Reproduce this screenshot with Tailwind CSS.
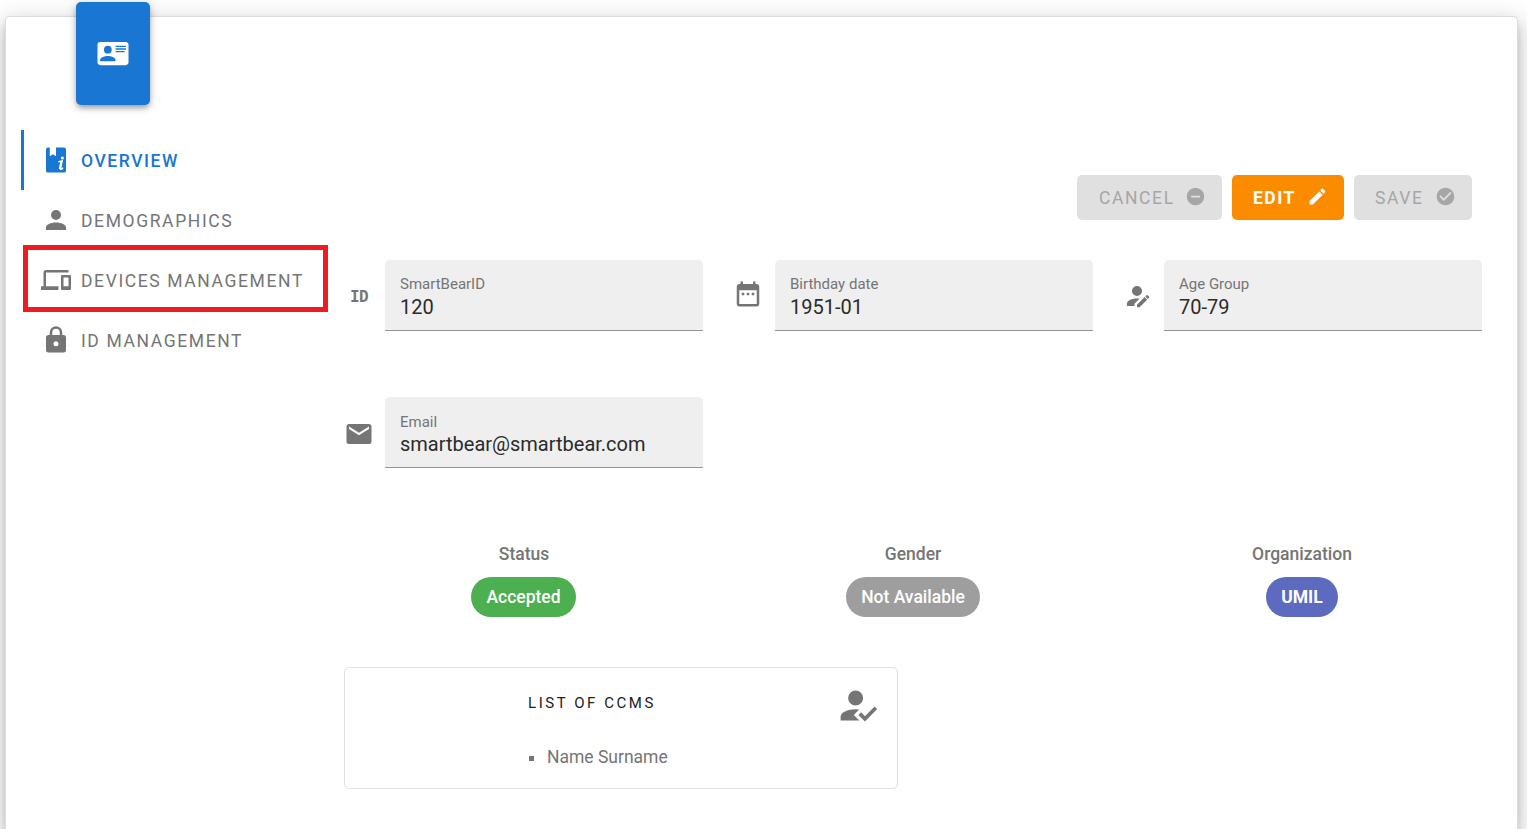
<!DOCTYPE html>
<html lang="en">
<head>
<meta charset="utf-8">
<title>Overview</title>
<script src="https://cdn.jsdelivr.net/npm/@tailwindcss/browser@4"></script>
</head>
<body class="h-[829px] overflow-hidden bg-white pt-4 pl-[5px] pr-[9px] font-[Roboto,sans-serif] text-[#757575]">
<main class="relative flex h-[813px] rounded-t-[5px] border border-b-0 border-[#dcdcdc] bg-white shadow-[0_6px_7px_-3px_rgba(0,0,0,0.2),0_10px_16px_1px_rgba(0,0,0,0.14),0_4px_22px_4px_rgba(0,0,0,0.12)]">
  <div class="absolute -top-[15px] left-[70px] flex h-[103px] w-[74px] items-center justify-center rounded-[5px] bg-[#1976d2] text-white shadow-[0_4px_5px_-2px_rgba(0,0,0,0.2),0_3px_6px_0_rgba(0,0,0,0.18),0_1px_12px_0_rgba(0,0,0,0.14)]">
    <svg class="h-[31px] w-[32px]" viewBox="0 0 24 24" fill="currentColor"><path d="M2,3H22C23.05,3 24,3.95 24,5V19C24,20.05 23.05,21 22,21H2C0.95,21 0,20.05 0,19V5C0,3.95 0.95,3 2,3M14,6V7H22V6H14M14,8V9H21.5L22,9V8H14M14,10V11H21V10H14M8,13.91C6,13.91 2,15 2,17V18H14V17C14,15 10,13.91 8,13.91M8,6A3,3 0 0,0 5,9A3,3 0 0,0 8,12A3,3 0 0,0 11,9A3,3 0 0,0 8,6Z"/></svg>
  </div>

  <nav class="ml-[15px] mt-[113px] w-[323px] shrink-0 text-[17.5px] tracking-[1.61px]">
    <a class="flex h-[60px] items-center gap-[10px] border-l-3 border-[#1976d2] pl-[17px] font-medium tracking-[1.56px] text-[#1976d2]">
      <svg class="h-[30px] w-[30px]" viewBox="0 0 24 24" fill="currentColor"><path d="M5.5,2H7V9L9.500,7.400L12,9V2H18.500A1.500,1.500 0 0,1 20,3.500V20.500A1.500,1.500 0 0,1 18.500,22H5.500A1.500,1.500 0 0,1 4,20.500V3.500A1.500,1.500 0 0,1 5.500,2Z"/><circle cx="17.100" cy="10.300" r="1.200" fill="white"/><path d="M13.900,13.500L16.900,12.700L15.500,18.900C15.400,19.900 16.600,19.600 17.600,18.200" fill="none" stroke="white" stroke-width="1.200"/><path d="M16.300,13L15,19.200" stroke="white" stroke-width="1.600"/></svg>
      <span class="pt-[2px]">OVERVIEW</span>
    </a>
    <a class="flex h-[60px] items-center gap-[10px] pl-5">
      <svg class="h-[30px] w-[30px]" viewBox="0 0 24 24" fill="currentColor"><path d="M12,4A4,4 0 0,1 16,8A4,4 0 0,1 12,12A4,4 0 0,1 8,8A4,4 0 0,1 12,4M12,14C16.42,14 20,15.79 20,18V20H4V18C4,15.79 7.58,14 12,14Z"/></svg>
      <span class="pt-[2px]">DEMOGRAPHICS</span>
    </a>
    <a class="relative flex h-[60px] items-center gap-[10px] pl-5">
      <span class="absolute left-[2px] -top-[5px] h-[67px] w-[305px] border-5 border-[#ed1c24]"></span>
      <svg class="h-[30px] w-[30px]" viewBox="0 0 24 24" fill="currentColor"><path d="M4 6h18V4H4c-1.1 0-2 .9-2 2v11H0v3h14v-3H4V6zm19 2h-6c-.55 0-1 .45-1 1v10c0 .55.45 1 1 1h6c.55 0 1-.45 1-1V9c0-.55-.45-1-1-1zm-1 9h-4v-7h4v7z"/></svg>
      <span class="pt-[2px]">DEVICES MANAGEMENT</span>
    </a>
    <a class="flex h-[60px] items-center gap-[10px] pl-5">
      <svg class="h-[30px] w-[30px]" viewBox="0 0 24 24" fill="currentColor"><path d="M12,17A2,2 0 0,0 14,15C14,13.89 13.1,13 12,13A2,2 0 0,0 10,15A2,2 0 0,0 12,17M18,8A2,2 0 0,1 20,10V20A2,2 0 0,1 18,22H6A2,2 0 0,1 4,20V10C4,8.89 4.9,8 6,8H7V6A5,5 0 0,1 12,1A5,5 0 0,1 17,6V8H18M12,3A3,3 0 0,0 9,6V8H15V6A3,3 0 0,0 12,3Z"/></svg>
      <span class="pt-[2px]">ID MANAGEMENT</span>
    </a>
  </nav>

  <section class="w-[1140px] shrink-0 pt-[158px]">
    <div class="mr-[12px] flex justify-end gap-[10px] text-[17.5px] tracking-[1.6px] text-[#a6a6a6]">
      <button class="flex h-[45px] w-[145px] items-center rounded-[5px] bg-[#e0e0e0] pl-[22px] pt-[2px]">CANCEL<svg class="-mt-[4px] ml-[10px] h-[21px] w-[21px]" viewBox="0 0 24 24" fill="currentColor"><path d="M17,13H7V11H17M12,2A10,10 0 0,0 2,12A10,10 0 0,0 12,22A10,10 0 0,0 22,12A10,10 0 0,0 12,2Z"/></svg></button>
      <button class="flex h-[45px] w-[112px] items-center rounded-[5px] bg-[#fb8c00] pl-[21px] pt-[2px] font-bold tracking-[1.5px] text-white">EDIT<svg class="-mt-[4px] ml-[11px] h-[21px] w-[21px]" viewBox="0 0 24 24" fill="currentColor"><path d="M20.71,7.04C21.1,6.65 21.1,6 20.71,5.63L18.37,3.29C18,2.9 17.35,2.9 16.96,3.29L15.12,5.12L18.87,8.87M3,17.25V21H6.75L17.81,9.93L14.06,6.18L3,17.25Z"/></svg></button>
      <button class="flex h-[45px] w-[118px] items-center rounded-[5px] bg-[#e0e0e0] pl-[21px] pt-[2px]">SAVE<svg class="-mt-[4px] ml-[11px] h-[21px] w-[21px]" viewBox="0 0 24 24" fill="currentColor"><path d="M12 2C6.5 2 2 6.5 2 12S6.5 22 12 22 22 17.5 22 12 17.5 2 12 2M10 17L5 12L6.41 10.59L10 14.17L17.59 6.58L19 8L10 17Z"/></svg></button>
    </div>

    <div class="mt-10 grid grid-cols-[359px_360px_359px] gap-x-[30px] gap-y-[66px]">
      <div class="flex justify-between">
        <span class="flex h-[71px] w-[30px] items-center justify-center pt-[2px] font-['DejaVu_Sans_Mono',monospace] text-base font-bold tracking-[-0.7px]">ID</span>
        <div class="h-[71px] w-[318px] rounded-t-[5px] border-b border-[#949494] bg-[#efefef] pl-[15px] pt-[14px]">
          <div class="text-[15px] leading-5">SmartBearID</div>
          <div class="text-[20px] leading-[26px] text-[#2b2b2b]">120</div>
        </div>
      </div>
      <div class="flex justify-between">
        <svg class="ml-[.3px] mt-[19.3px] h-[30px] w-[30px]" viewBox="0 0 24 24" fill="currentColor"><path d="M9 11H7v2h2v-2zm4 0h-2v2h2v-2zm4 0h-2v2h2v-2zm2-7h-1V2h-2v2H8V2H6v2H5c-1.11 0-1.99.9-1.99 2L3 20c0 1.1.89 2 2 2h14c1.1 0 2-.9 2-2V6c0-1.1-.9-2-2-2zm0 16H5V9h14v11z"/></svg>
        <div class="h-[71px] w-[318px] rounded-t-[5px] border-b border-[#949494] bg-[#efefef] pl-[15px] pt-[14px]">
          <div class="text-[15px] leading-5">Birthday date</div>
          <div class="text-[20px] leading-[26px] text-[#2b2b2b]">1951-01</div>
        </div>
      </div>
      <div class="flex justify-between">
        <svg class="-ml-[.6px] mt-[21px] h-[30px] w-[30px]" viewBox="0 0 24 24" fill="currentColor"><path d="M21.7,13.35L20.7,14.35L18.65,12.3L19.65,11.3C19.86,11.08 20.21,11.08 20.42,11.3L21.7,12.58C21.92,12.79 21.92,13.14 21.7,13.35M12,18.94L18.06,12.88L20.11,14.93L14.06,21H12V18.94M12,14C7.58,14 4,15.79 4,18V20H10V18.11L14,14.11C13.34,14.03 12.67,14 12,14M12,4A4,4 0 0,0 8,8A4,4 0 0,0 12,12A4,4 0 0,0 16,8A4,4 0 0,0 12,4Z"/></svg>
        <div class="h-[71px] w-[318px] rounded-t-[5px] border-b border-[#949494] bg-[#efefef] pl-[15px] pt-[14px]">
          <div class="text-[15px] leading-5">Age Group</div>
          <div class="text-[20px] leading-[26px] text-[#2b2b2b]">70-79</div>
        </div>
      </div>
      <div class="flex justify-between">
        <svg class="ml-[.2px] mt-[22px] h-[30px] w-[30px]" viewBox="0 0 24 24" fill="currentColor"><path d="M20,8L12,13L4,8V6L12,11L20,6M20,4H4C2.89,4 2,4.89 2,6V18A2,2 0 0,0 4,20H20A2,2 0 0,0 22,18V6C22,4.89 21.1,4 20,4Z"/></svg>
        <div class="h-[71px] w-[318px] rounded-t-[5px] border-b border-[#949494] bg-[#efefef] pl-[15px] pt-[15px]">
          <div class="text-[15px] leading-5">Email</div>
          <div class="text-[20px] leading-[25px] text-[#2b2b2b]">smartbear@smartbear.com</div>
        </div>
      </div>
    </div>

    <div class="mt-[73px] grid grid-cols-[360px_360px_360px] gap-x-[29px] text-center text-[17.5px] font-medium">
      <div><div class="leading-[26px]">Status</div><span class="mt-[10px] mr-px inline-flex h-10 w-[105px] items-center justify-center rounded-full bg-[#4caf50] text-white">Accepted</span></div>
      <div><div class="leading-[26px]">Gender</div><span class="mt-[10px] inline-flex h-10 w-[134px] items-center justify-center rounded-full bg-[#9e9e9e] text-white">Not Available</span></div>
      <div><div class="leading-[26px]">Organization</div><span class="mt-[10px] inline-flex h-10 w-[72px] items-center justify-center rounded-full bg-[#5c6bc0] font-bold text-white">UMIL</span></div>
    </div>

    <div class="mt-[50px] flex h-[122px] w-[554px] justify-between rounded-[5px] border border-[#e0e0e0] pl-[183px] pr-[17px]">
      <div>
        <div class="mt-[24px] text-[15px] leading-[22px] tracking-[2.55px] text-[#212121]">LIST OF CCMS</div>
        <div class="mt-[30px] flex items-center text-[17.5px] leading-[26px]"><span class="mr-[13px] mt-[2px] ml-px h-[5px] w-[5px] bg-[#757575]"></span>Name Surname</div>
      </div>
      <svg class="mt-[15px] h-[45px] w-[45px]" viewBox="0 0 24 24" fill="currentColor"><path d="M21.1,12.5L22.5,13.91L15.97,20.5L12.5,17L13.9,15.59L15.97,17.67L21.1,12.5M10,17L13,20H3V18C3,15.79 6.58,14 11,14L12.89,14.11L10,17M11,4A4,4 0 0,1 15,8A4,4 0 0,1 11,12A4,4 0 0,1 7,8A4,4 0 0,1 11,4Z"/></svg>
    </div>
  </section>
</main>
</body>
</html>
